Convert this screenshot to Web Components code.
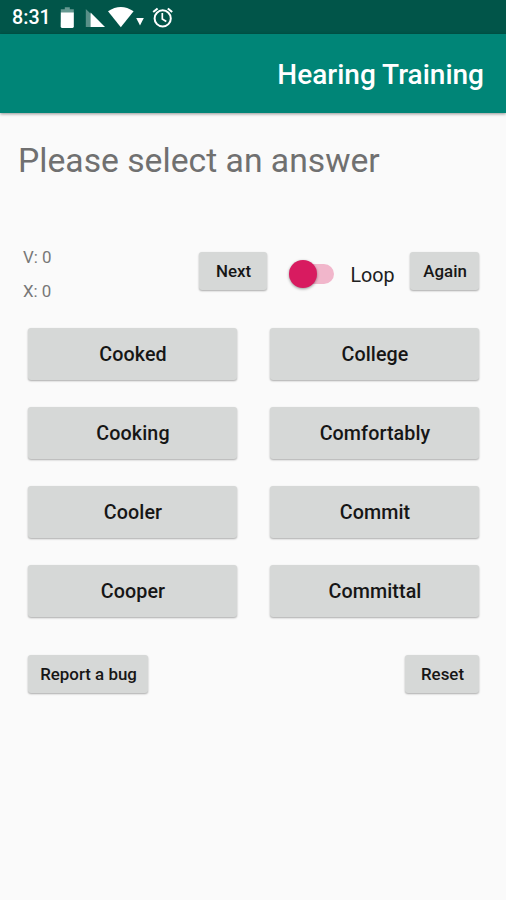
<!DOCTYPE html>
<html lang="en">
<head>
<meta charset="utf-8">
<title>Hearing Training</title>
<style>
  html, body { margin: 0; height: 100%; background: #fafafa; }
  body { font-family: Roboto, "Liberation Sans", sans-serif; overflow: hidden; }
</style>
</head>
<body>
<hearing-app></hearing-app>
<script>
const define = (name, html) => {
  const template = document.createElement('template');
  template.innerHTML = html;
  customElements.define(name, class extends HTMLElement {
    constructor() {
      super();
      this.attachShadow({ mode: 'open' }).append(template.content.cloneNode(true));
    }
  });
};

define('status-bar', `
  <style>
    :host { display: flex; align-items: flex-start; height: 34px; background: #015549; color: #fff; box-sizing: border-box; padding-left: 12px; }
    .time { width: 48px; font-size: 19.7px; font-weight: 500; line-height: 22px; padding-top: 7px; }
    svg { display: block; fill: #fff; }
  </style>
  <span class="time"><slot></slot></span>
  <svg width="120" height="34" viewBox="60 0 120 34">
    <path opacity=".4" d="M64.8 7.2h5v2h4v4H60.8v-4h4z"/>
    <path d="M60.8 12.6h13v14a1.3 1.3 0 0 1-1.3 1.3H62a1.3 1.3 0 0 1-1.3-1.3z"/>
    <path opacity=".35" d="M85.8 8.9l5.2 5v13h-5.2z"/>
    <path d="M90.6 12.6L105 26.9H90.6z"/>
    <path d="M108 11.3Q120.800 2.800 133.600 11.300L120.800 27.300z"/>
    <path d="M136.200 17.900h7.600l-3.800 7.600z"/>
    <g fill="none" stroke="#fff" stroke-width="2">
      <circle cx="162.700" cy="18.400" r="8.100"/>
      <path d="M162.300 13v6l4 2.500" stroke-width="1.700"/>
      <path d="M153.200 12.100l4.400-3.700M172.200 12.100l-4.400-3.700"/>
    </g>
  </svg>`);

define('app-bar', `
  <style>
    :host { display: flex; justify-content: flex-end; align-items: center; height: 78.5px; box-sizing: border-box; padding: 4px 22px 0 0; background: #008577; color: #fff; box-shadow: 0 1px 3px rgba(0,0,0,.42); }
    span { font-size: 28px; line-height: 34px; font-weight: 500; }
  </style>
  <span><slot></slot></span>`);

define('raised-button', `
  <style>
    :host { display: flex; align-items: center; justify-content: center; box-sizing: border-box; height: 38px; padding-left: 1px; border-radius: 3px; background: #d6d8d7; color: #161616; font-size: 16.9px; font-weight: 500; line-height: 22px; white-space: nowrap; box-shadow: 0 1px 2px rgba(0,0,0,.32); }
    :host([large]) { height: 52px; padding-top: 2px; font-size: 19.7px; letter-spacing: .1px; }
  </style>
  <slot></slot>`);

define('loop-switch', `
  <style>
    :host { display: flex; align-items: center; color: #202020; }
    .track { width: 44px; height: 20px; margin-right: 16px; border-radius: 10px; background: #f1b6cb; display: flex; align-items: center; }
    .thumb { width: 28px; height: 28px; flex: none; border-radius: 50%; background: #d81b60; box-shadow: 0 1px 3px rgba(0,0,0,.4); margin-left: -1px; }
    .label { font-size: 19.7px; line-height: 24px; padding-top: 4px; }
  </style>
  <span class="track"><span class="thumb"></span></span><span class="label"><slot></slot></span>`);

define('score-board', `
  <style>
    :host { display: grid; grid-template-rows: 34px 34px; font-size: 16.9px; line-height: 20px; color: #777; }
  </style>
  <slot></slot>`);

define('answer-grid', `
  <style>
    :host { display: grid; grid-template-columns: 209px 209px; column-gap: 33px; row-gap: 27px; }
  </style>
  <slot></slot>`);

define('hearing-app', `
  <style>
    :host { display: flex; flex-direction: column; width: 506px; height: 900px; background: #fafafa; }
    h1 { margin: 26px 0 0 18px; font-size: 33.7px; line-height: 44px; font-weight: 400; color: #707070; white-space: nowrap; }
    .controls { display: flex; align-items: flex-start; height: 76px; margin: 69.5px 27px 0 23px; }
    score-board { width: 176px; margin-top: -5px; }
    loop-switch { margin: 8px 0 0 23px; width: 120px; height: 28px; }
    .control { width: 69px; }
    answer-grid { margin-left: 28px; }
    .footer { display: flex; justify-content: space-between; margin: 38px 27px 0 28px; }
    .bug { width: 120px; } .reset { width: 74px; }
  </style>
  <status-bar>8:31</status-bar>
  <app-bar>Hearing Training</app-bar>
  <h1>Please select an answer</h1>
  <div class="controls">
    <score-board><span>V: 0</span><span>X: 0</span></score-board>
    <raised-button class="control">Next</raised-button>
    <loop-switch>Loop</loop-switch>
    <raised-button class="control">Again</raised-button>
  </div>
  <answer-grid>
    <raised-button large>Cooked</raised-button><raised-button large>College</raised-button>
    <raised-button large>Cooking</raised-button><raised-button large>Comfortably</raised-button>
    <raised-button large>Cooler</raised-button><raised-button large>Commit</raised-button>
    <raised-button large>Cooper</raised-button><raised-button large>Committal</raised-button>
  </answer-grid>
  <div class="footer">
    <raised-button class="bug">Report a bug</raised-button>
    <raised-button class="reset">Reset</raised-button>
  </div>`);
</script>
</body>
</html>
